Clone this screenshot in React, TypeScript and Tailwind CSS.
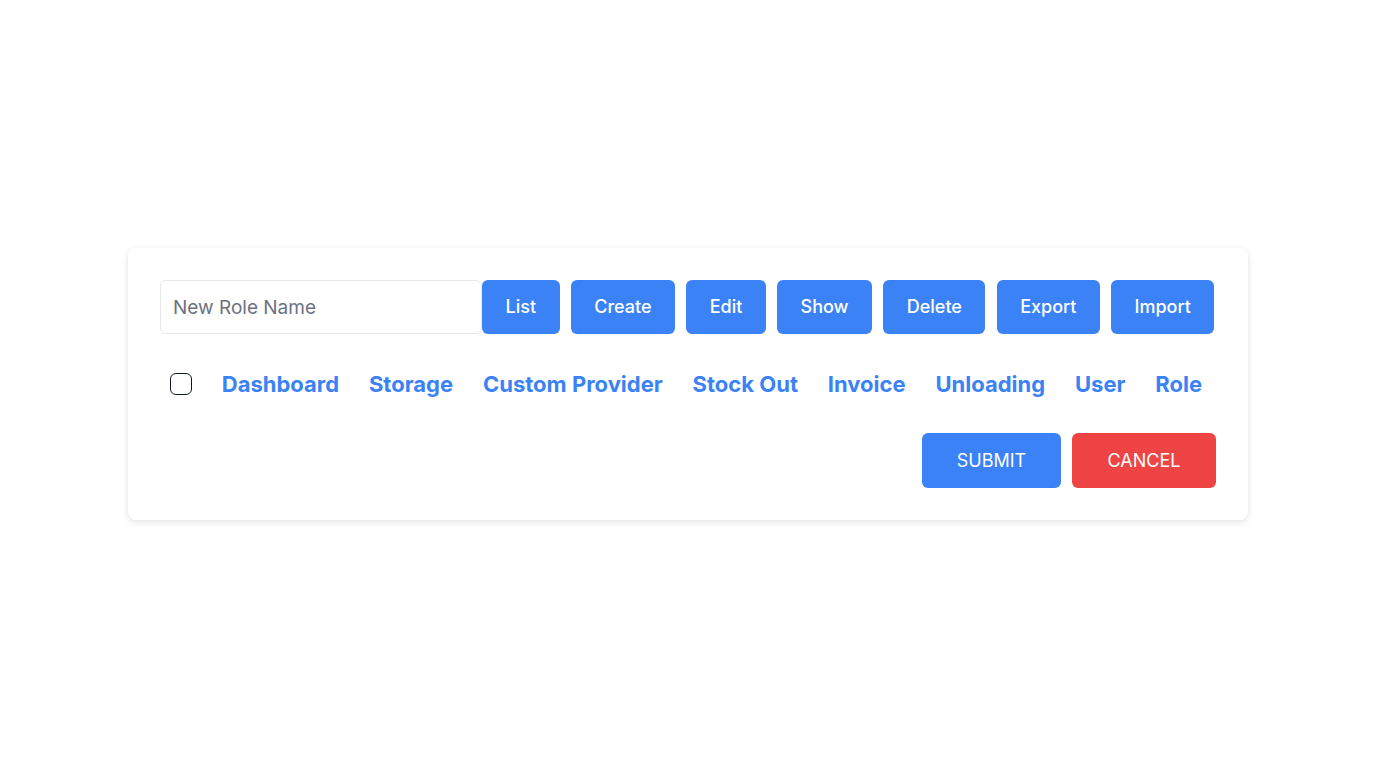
import { useState } from "react";

const actions = ["List", "Create", "Edit", "Show", "Delete", "Export", "Import"];
const modules = ["Dashboard", "Storage", "Custom Provider", "Stock Out", "Invoice", "Unloading", "User", "Role"];

export default function App() {
  const [name, setName] = useState("");
  const [all, setAll] = useState(false);

  return (
    <div className="min-h-screen bg-white flex items-center justify-center font-['Inter',sans-serif]">
      <div className="w-[1120px] bg-white rounded-lg shadow-[0_2px_6px_rgba(0,0,0,0.12)] p-8">
        <div className="flex items-center">
          <input
            value={name}
            onChange={(e) => setName(e.target.value)}
            placeholder="New Role Name"
            className="w-[322px] h-[54px] border border-gray-200 rounded-md px-3 text-[19px] text-gray-700 placeholder:text-[#6b7280] outline-none"
          />
          <div className="flex gap-[11.2px]">
            {actions.map((a) => (
              <button key={a} className="h-[54px] px-[23.5px] rounded-md bg-[#3b82f6] text-white text-lg font-medium">
                {a}
              </button>
            ))}
          </div>
        </div>

        <div className="flex items-center justify-around mt-9 h-7 -ml-[5px] -mr-[1px]">
          <button
            onClick={() => setAll(!all)}
            className={`w-[22px] h-[22px] rounded-md border border-gray-900 ${all ? "bg-[#3b82f6]" : "bg-white"}`}
          />
          {modules.map((m) => (
            <span key={m} className="text-[22px] font-bold text-[#3b82f6]">
              {m}
            </span>
          ))}
        </div>

        <div className="flex justify-end gap-[11px] mt-[35px]">
          <button className="h-[55px] w-[139px] rounded-md bg-[#3b82f6] text-white text-lg uppercase">Submit</button>
          <button className="h-[55px] w-[144px] rounded-md bg-[#ef4444] text-white text-lg uppercase">Cancel</button>
        </div>
      </div>
    </div>
  );
}
